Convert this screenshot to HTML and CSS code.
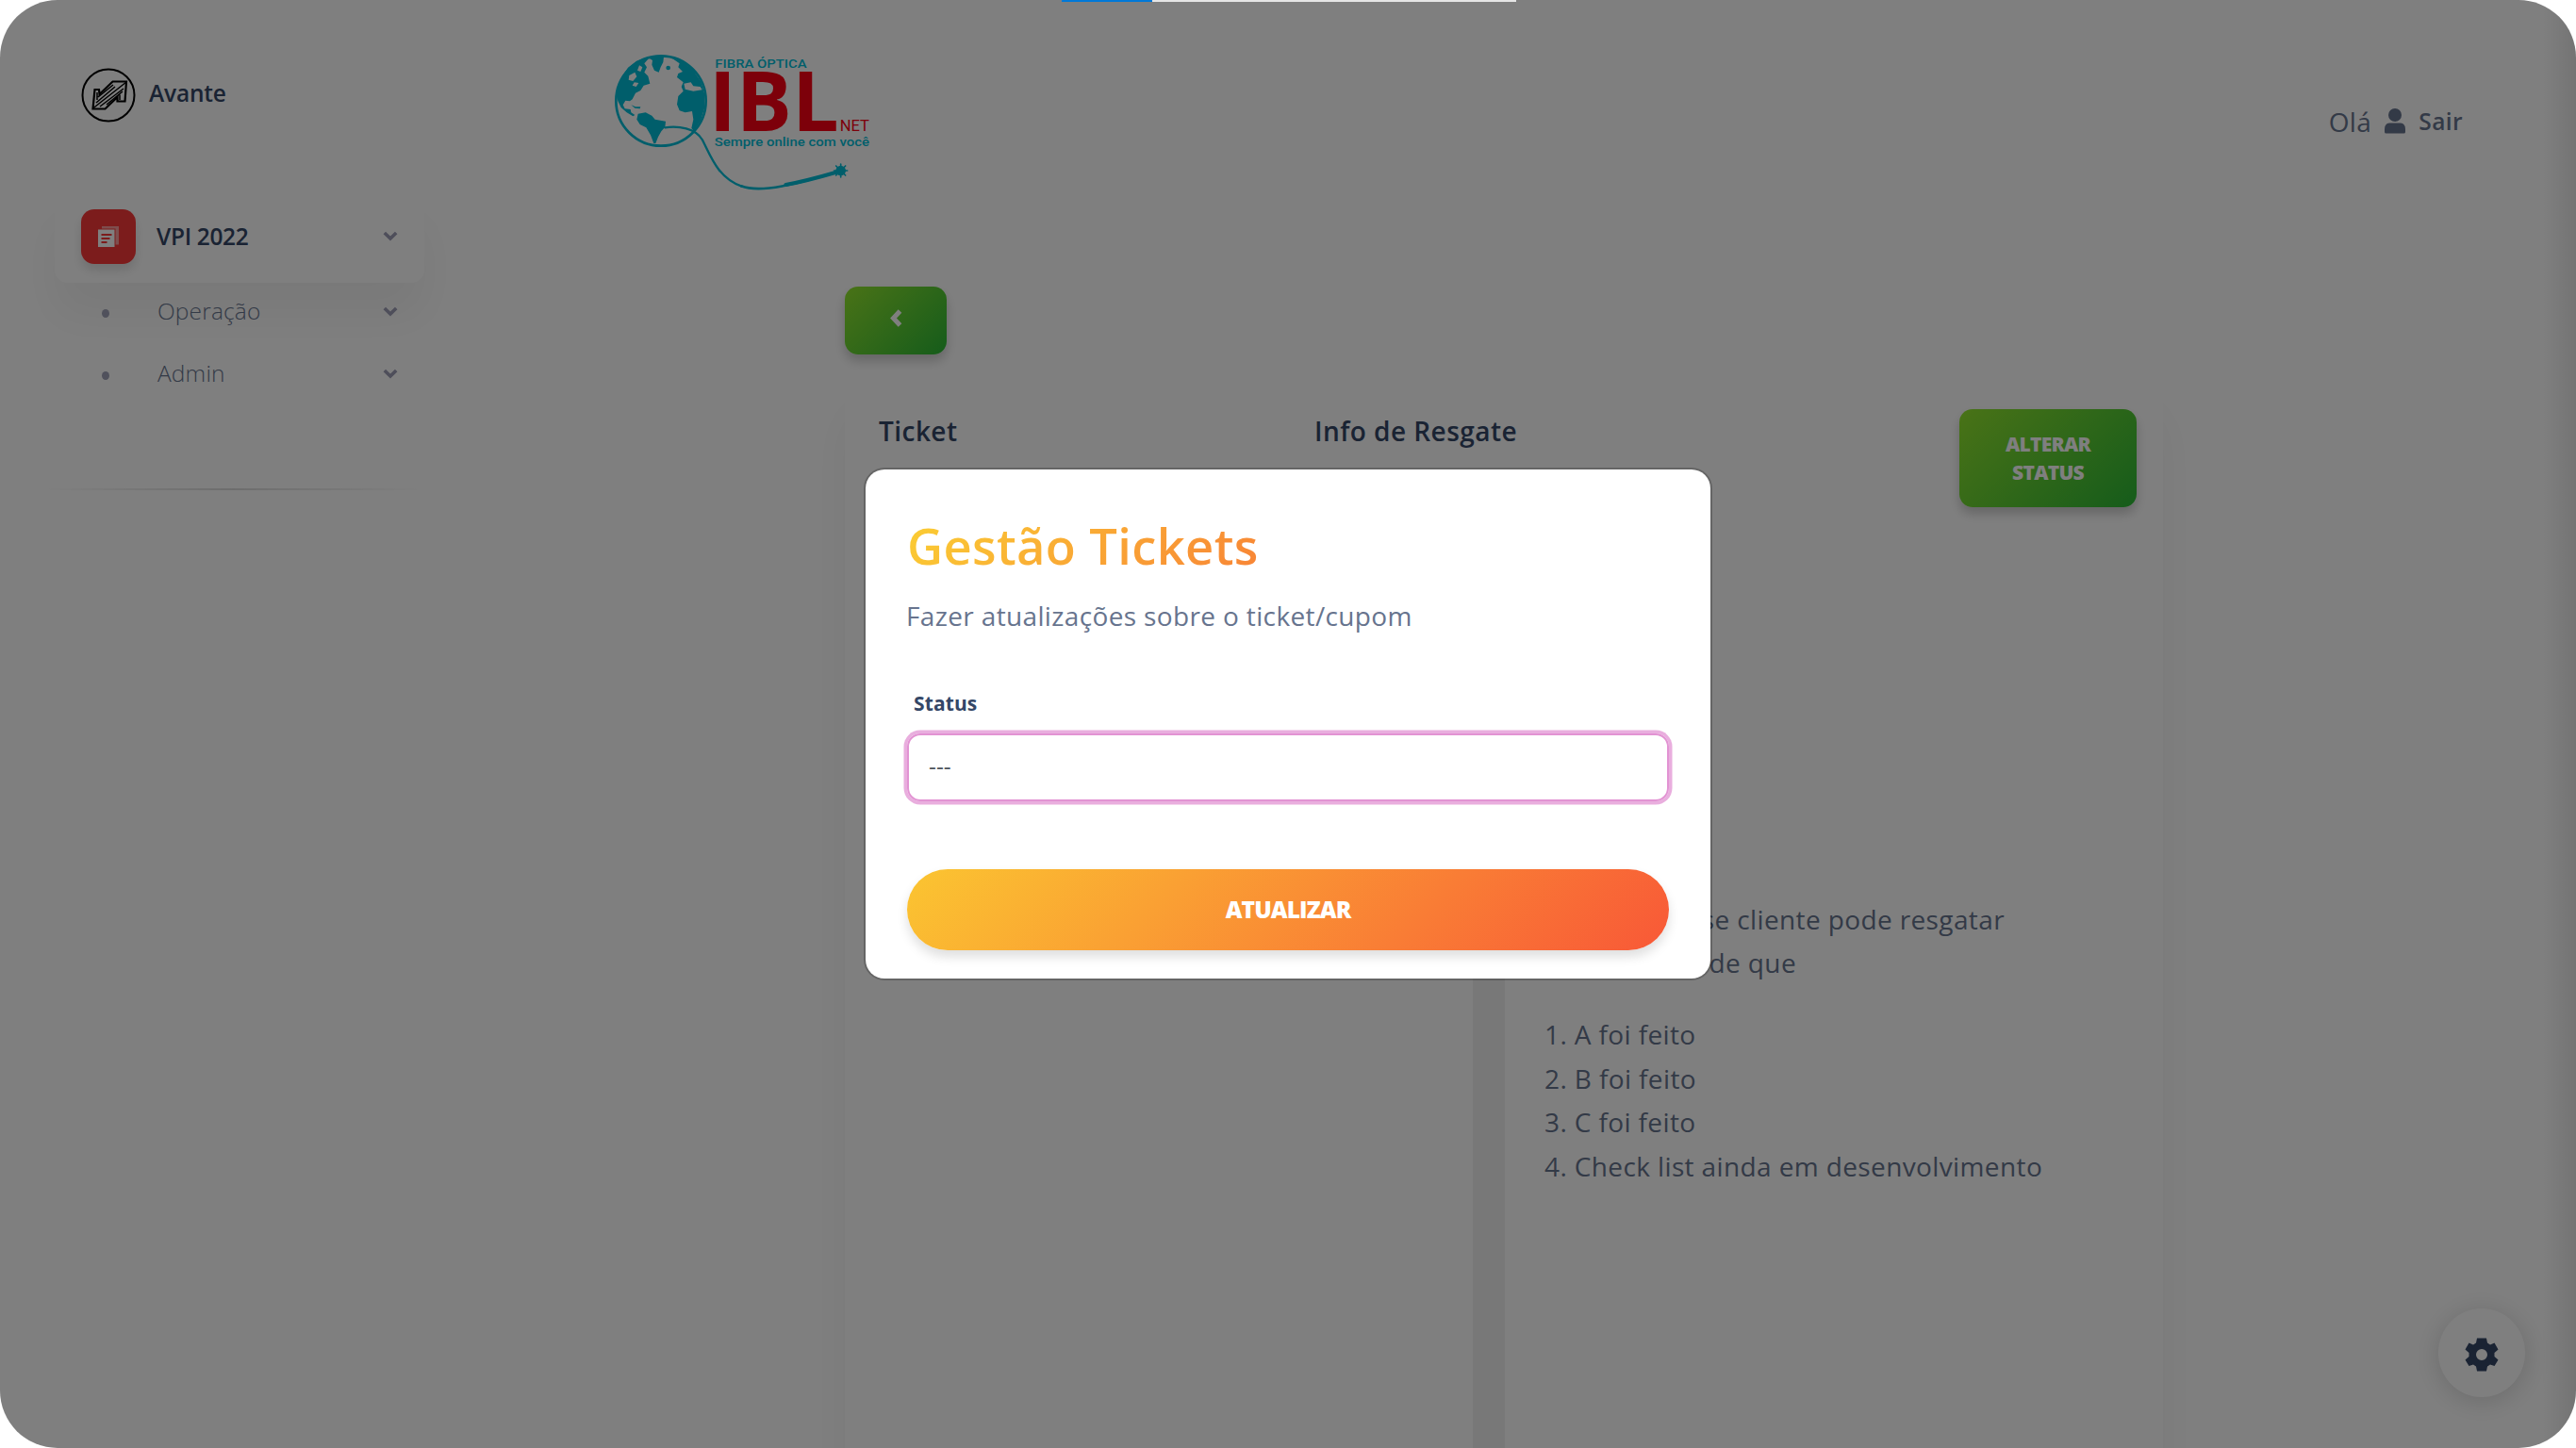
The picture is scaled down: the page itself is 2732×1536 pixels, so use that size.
FILE: index.html
```html
<!DOCTYPE html>
<html lang="pt-BR">
<head>
<meta charset="utf-8">
<title>Avante - Gestão Tickets</title>
<link rel="stylesheet" href="styles.css">
</head>
<body>
<div class="app">
  <aside class="sidebar">
    <div class="brand">
      <svg class="brand-logo" viewBox="0 0 58 58" fill="none" stroke="#000" stroke-width="2">
        <circle cx="29" cy="29" r="27.500"/>
        <path d="M12.500 43.500 L14.500 23 L19 23 L19.500 28 L33.500 14.500 H48 L46.500 35.500 H38.500 V31 L25.500 43.500 Z" stroke-width="2.200"/>
        <path d="M12.500 43 L48 15 M16 37 L36 20 M20 41 L45 22 M18 31 L34 18 M41 28.500 L41 34 M17 26 L17 34 M27 39 L44 25" stroke-width="1.500"/>
      </svg>
      <span class="brand-name">Avante</span>
    </div>
    <nav class="nav">
      <a class="nav-main">
        <span class="nav-icon">
          <svg width="22" height="22" viewBox="0 0 22 22"><path fill="#fff" fill-opacity=".5" d="M4 0h18v19.500h-3.500V2.500H4z"/><path fill="#fff" fill-rule="evenodd" d="M0 3.500h17.500V22H0zM3.500 8v2h11V8zm0 4v2h9v-2zm0 4v2h6v-2z"/></svg>
        </span>
        <span class="nav-label">VPI 2022</span>
        <svg class="chevron" viewBox="0 0 16 11"><path d="M1.800 2 L8 8 L14.200 2"/></svg>
      </a>
      <a class="nav-sub"><i class="dot"></i><span class="nav-label">Operação</span><svg class="chevron" viewBox="0 0 16 11"><path d="M1.800 2 L8 8 L14.200 2"/></svg></a>
      <a class="nav-sub"><i class="dot"></i><span class="nav-label">Admin</span><svg class="chevron" viewBox="0 0 16 11"><path d="M1.800 2 L8 8 L14.200 2"/></svg></a>
    </nav>
    <div class="divider"></div>
  </aside>

  <main class="main">
    <header class="topbar">
      <svg class="ibl" viewBox="0 0 960 570">
        <g fill="#00bcd6">
          <circle cx="213" cy="231" r="143" fill="none" stroke="#00bcd6" stroke-width="8"/>
          <path d="M72 216 L76 185 L92 150 L108 125 L135 104 L160 95 L172 98 L160 112 L168 124 L160 140 L172 152 L178 176 L158 182 L148 198 L132 206 L122 226 L114 232 L100 230 L92 244 L98 256 L116 258 L118 268 L130 276 L124 280 L104 268 L86 252 L76 232 Z"/>
          <path d="M172 93 L190 87 L222 90 L220 108 L212 124 L206 140 L192 134 L184 116 L186 102 Z"/>
          <path d="M140 272 L164 268 L184 278 L194 290 L228 296 L226 314 L214 328 L204 346 L196 366 L190 366 L180 340 L166 316 L146 306 L136 290 Z"/>
          <path d="M246 94 L284 108 L316 134 L340 170 L352 210 L352 252 L340 292 L318 328 L310 318 L316 290 L312 264 L290 268 L272 262 L264 242 L268 216 L284 200 L278 186 L284 172 L264 156 L268 144 L282 138 L268 124 L272 112 Z"/>
          <circle cx="236" cy="126" r="7"/><path d="M118 244 l14 6 l16 0 l-2 6 l-16 -2z"/>
        </g>
        <g fill="#fff"><path d="M112 150l18-10 6 14-12 14-14-4z"/><path d="M144 118l10 6-6 14-10-4z"/><path d="M286 176l22-4 8 12 22 2 6 10-28 4-26-6z"/><path d="M128 172l14 2-8 12-12-4z"/></g>
        <g fill="none" stroke="#00bcd6" stroke-linecap="round">
          <path d="M226 316 C270 310 322 318 344 354 C370 402 392 476 470 503" stroke-width="7"/>
          <path d="M468 502 C535 528 660 490 785 454" stroke-width="8"/>
          <path d="M610 498 C680 485 730 470 785 454" stroke-width="12"/>
          <path d="M785 432v42M764 453h42M770 438l30 30M770 468l30-30" stroke-width="5"/>
        </g>
        <circle cx="785" cy="453" r="16" fill="#00bcd6"/>
        <g class="ibl-small" fill="#00bcd6">
          <text x="385" y="125" font-size="40" textLength="292" lengthAdjust="spacingAndGlyphs">FIBRA ÓPTICA</text>
          <text x="383" y="375" font-size="41" textLength="493" lengthAdjust="spacingAndGlyphs">Sempre online com você</text>
        </g>
        <text class="ibl-big" x="365" y="328" font-size="266" textLength="414" lengthAdjust="spacingAndGlyphs" fill="#fb0014">IBL</text>
        <text class="ibl-net" x="782" y="328" font-size="50" textLength="94" lengthAdjust="spacingAndGlyphs" fill="#fb0014">NET</text>
      </svg>
      <div class="user">
        <span class="hello">Olá</span>
        <svg width="22" height="27" viewBox="0 0 22 27" fill="#67748e"><circle cx="11" cy="7" r="7"/><path d="M5 15.500H17Q22 16 22 22V25Q22 26.500 20.500 26.500H1.500Q0 26.500 0 25V22Q0 16 5 15.500Z"/></svg>
        <span class="logout">Sair</span>
      </div>
    </header>

    <section class="content">
      <button class="btn-green btn-back"><svg width="14" height="19" viewBox="0 0 14 19"><path d="M11.500 2 L4.500 9.500 L11.500 17" fill="none" stroke="#fff" stroke-width="5"/></svg></button>
      <div class="panel">
        <div class="panel-head">
          <h6 class="col-ticket">Ticket</h6>
          <h6 class="col-info">Info de Resgate</h6>
          <button class="btn-green btn-status">Alterar<br>status</button>
        </div>
        <div class="panel-body">
          <div class="panel-left"></div>
          <div class="gutter"></div>
          <div class="panel-right">
            <p class="line-wide">se cliente pode resgatar</p>
            <p class="line-short">de que</p>
            <ol>
              <li>1. A foi feito</li>
              <li>2. B foi feito</li>
              <li>3. C foi feito</li>
              <li>4. Check list ainda em desenvolvimento</li>
            </ol>
          </div>
        </div>
      </div>
    </section>
  </main>

  <div class="offcanvas-edge"></div>
  <div class="settings">
    <svg width="36" height="36" viewBox="-18 -18 36 36" fill="#344767"><path fill-rule="evenodd" d="M-5-17.500H5L6-12.500L9-10.500L13.500-12.500L17.500-5.500L13.500-2V2L17.500 5.500L13.500 12L9 10.500L6 12.500L5 17.500H-5L-6 12.500L-9 10.500L-13.500 12L-17.500 5.500L-13.500 2V-2L-17.500-5.500L-13.500-12.500L-9-10.500L-6-12.500ZM0-6A6 6 0 1 0 0 6A6 6 0 1 0 0-6Z"/></svg>
  </div>

  <div class="backdrop"></div>
  <div class="modal">
    <h3 class="modal-title">Gestão Tickets</h3>
    <p class="modal-sub">Fazer atualizações sobre o ticket/cupom</p>
    <label class="field-label">Status</label>
    <div class="select">---</div>
    <button class="btn-update">Atualizar</button>
  </div>
  <div class="progress"><div class="progress-bar"></div></div>
</div>
</body>
</html>
```
FILE: styles.css
```css
* { box-sizing: border-box; }
body { margin: 0; background: #fff; font-family: "Open Sans", sans-serif; color: #67748e; }
h3, h6, p, ol { margin: 0; padding: 0; }
button { border: 0; margin: 0; font-family: inherit; color: #fff; text-transform: uppercase; font-weight: 800; }

.app { position: relative; display: flex; width: 2732px; height: 1536px; overflow: hidden; border-radius: 61px; background: #fff; }

.sidebar { width: 484px; padding: 72px 34px 0 58px; }
.brand { display: flex; align-items: center; gap: 14px; height: 58px; padding-left: 28px; }
.brand-logo { width: 58px; height: 58px; }
.brand-name { font-size: 24.5px; line-height: 34px; font-weight: 600; letter-spacing: -.2px; color: #344767; padding-bottom: 5px; }
.nav { display: flex; flex-direction: column; margin-top: 71px; }
.nav-main { display: flex; align-items: center; height: 99px; padding: 0 28px; border-radius: 14px; background: #fff; box-shadow: 0 35px 47px rgba(0,0,0,.05); color: #344767; font-weight: 600; }
.nav-icon { display: flex; align-items: center; justify-content: center; width: 58px; height: 58px; margin-right: 22px; border-radius: 14px; background: #f93838; box-shadow: 0 7px 11px rgba(0,0,0,.12); }
.nav-label { flex: 1; font-size: 24.5px; line-height: 34px; letter-spacing: -.35px; }
.nav-sub { display: flex; align-items: center; height: 66px; padding: 0 28px; color: #67748e; font-weight: 300; }
.nav-sub .nav-label { letter-spacing: .15px; }
.nav-sub:nth-child(2) { margin-top: -3px; }
.dot { width: 8px; height: 9px; margin: 4px 51px 0 22px; border-radius: 50%; background: #a0a3b8; }
.chevron { width: 16px; height: 11px; fill: none; stroke: #9c9cb4; stroke-width: 3.6; }
.divider { height: 2px; margin: 89px 0 0 -14px; background: linear-gradient(90deg, transparent, rgba(0,0,0,.14), transparent); }

.main { flex: 1; }
.topbar { display: flex; justify-content: space-between; padding: 30px 120px 0 146px; height: 227px; }
.ibl { width: 320px; height: 190px; }
.ibl-small { font-family: Roboto, sans-serif; font-weight: 500; }
.ibl-big { font-family: "Open Sans", sans-serif; font-weight: 700; }
.ibl-net { font-family: Roboto, sans-serif; }
.user { display: flex; align-items: center; height: 197px; gap: 14px; }
.hello { font-size: 28px; line-height: 40px; letter-spacing: .4px; }
.logout { font-size: 24.5px; line-height: 36px; font-weight: 600; letter-spacing: .4px; }

.content { width: 1398px; margin: 77px 0 0 412px; display: flex; flex-direction: column; align-items: flex-start; }
.btn-green { background: linear-gradient(135deg, #93e62e, #2bb836); border-radius: 14px; box-shadow: 0 7px 12px rgba(0,0,0,.2); }
.btn-back { display: flex; align-items: center; justify-content: center; width: 108px; height: 72px; padding-bottom: 6px; }
.panel { width: 1398px; height: 1236px; margin-top: 24px; border-radius: 28px; background: #fff; box-shadow: 0 35px 47px rgba(0,0,0,.05); }
.panel-head { display: flex; padding: 34px 28px 0 36px; height: 400px; }
.panel-head h6 { margin-top: 3px; font-size: 28px; line-height: 40px; font-weight: 600; letter-spacing: .45px; color: #344767; }
.col-ticket { width: 462px; }
.col-info { flex: 1; }
.btn-status { width: 188px; height: 104px; font-size: 21px; line-height: 30px; letter-spacing: -.7px; padding: 0; }
.panel-body { display: flex; height: 836px; }
.panel-left { width: 666px; }
.gutter { width: 34px; background: #f0f0f0; }
.panel-right { flex: 1; padding: 152px 42px 0; font-size: 28px; line-height: 46.67px; letter-spacing: .38px; white-space: nowrap; }
.panel-right p { display: flex; justify-content: flex-end; line-height: 46px; }
.line-wide { width: 488px; }
.line-short { width: 267px; }
.panel-right ol { list-style: none; margin-top: 30px; }

.offcanvas-edge { position: absolute; right: 0; top: 0; width: 36px; height: 1536px; background: linear-gradient(90deg, transparent, rgba(0,0,0,.09)); }
.settings { position: absolute; left: 2586px; top: 1388px; width: 92px; height: 94px; padding-top: 3px; border-radius: 50%; display: flex; align-items: center; justify-content: center; background: #fff; box-shadow: 0 4px 28px rgba(0,0,0,.16); }

.backdrop { position: absolute; inset: 0; background: rgba(0,0,0,.5); }
.modal { position: absolute; left: 916px; top: 496px; width: 900px; height: 544px; padding: 0 44px; border: 2px solid rgba(0,0,0,.2); border-radius: 22px; background: #fff; background-clip: padding-box; display: flex; flex-direction: column; }
.modal-title { margin-top: 45px; font-size: 52.5px; line-height: 72px; font-weight: 600; letter-spacing: .35px; color: transparent; background: linear-gradient(135deg, #fbcf33, #f53939); -webkit-background-clip: text; background-clip: text; }
.modal-sub { margin-top: 18px; margin-left: -1px; font-size: 28px; line-height: 40px; letter-spacing: .36px; }
.field-label { margin-top: 58px; padding-left: 7px; font-size: 21px; line-height: 30px; font-weight: 700; letter-spacing: .1px; color: #344767; }
.select { margin-top: 17px; height: 72px; padding: 0 21px; border: 2px solid #e293d3; border-radius: 14px; box-shadow: 0 0 0 3.5px #e9aede; font-size: 24.5px; line-height: 65px; color: #495057; }
.btn-update { margin-top: 72px; height: 86px; padding: 0 0 2px; border-radius: 43px; font-size: 24.5px; letter-spacing: -.9px; background: linear-gradient(135deg, #fbc531, #f85837); box-shadow: 0 7px 12px rgba(0,0,0,.13); }

.progress { position: absolute; left: 1126px; top: 0; width: 482px; height: 2px; background: #e5e5e5; }
.progress-bar { width: 96px; height: 2px; background: #0078d7; }
```
